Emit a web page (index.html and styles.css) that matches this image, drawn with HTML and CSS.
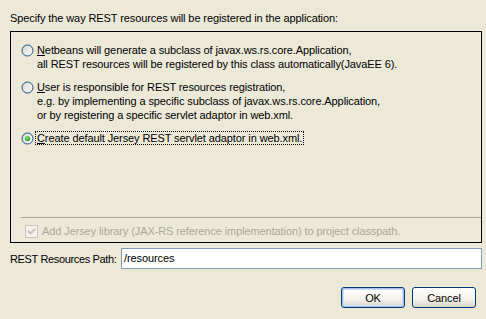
FILE: index.html
```html
<!DOCTYPE html>
<html lang="en">
<head>
  <meta charset="UTF-8">
  <title>REST Resources Configuration</title>
  <link rel="stylesheet" href="styles.css">
</head>
<body>
  <div class="dialog">
    <div class="heading">Specify the way REST resources will be registered in the application:</div>

    <div class="group">
      <div class="options">
        <div class="option">
          <svg class="radio" width="13" height="13" viewBox="0 0 13 13">
            <defs><linearGradient id="rg1" x1="0" y1="0" x2="1" y2="1"><stop offset="0" stop-color="#D6D4CA"/><stop offset="1" stop-color="#FFFFFF"/></linearGradient></defs>
            <circle cx="6.5" cy="6.5" r="5.5" fill="url(#rg1)" stroke="#1C5180"/>
          </svg>
          <div class="option-text"><u>N</u>etbeans will generate a subclass of javax.ws.rs.core.Application,<br>all REST resources will be registered by this class automatically(JavaEE 6).</div>
        </div>

        <div class="option">
          <svg class="radio" width="13" height="13" viewBox="0 0 13 13">
            <defs><linearGradient id="rg2" x1="0" y1="0" x2="1" y2="1"><stop offset="0" stop-color="#D6D4CA"/><stop offset="1" stop-color="#FFFFFF"/></linearGradient></defs>
            <circle cx="6.5" cy="6.5" r="5.5" fill="url(#rg2)" stroke="#1C5180"/>
          </svg>
          <div class="option-text"><u>U</u>ser is responsible for REST resources registration,<br>e.g. by implementing a specific subclass of javax.ws.rs.core.Application,<br>or by registering a specific servlet adaptor in web.xml.</div>
        </div>

        <div class="option">
          <svg class="radio" width="13" height="13" viewBox="0 0 13 13">
            <defs>
              <linearGradient id="rg3" x1="0" y1="0" x2="1" y2="1"><stop offset="0" stop-color="#D6D4CA"/><stop offset="1" stop-color="#FFFFFF"/></linearGradient>
              <radialGradient id="dot" cx="0.4" cy="0.35" r="0.7"><stop offset="0" stop-color="#7BE07B"/><stop offset="1" stop-color="#1E9A1E"/></radialGradient>
            </defs>
            <circle cx="6.5" cy="6.5" r="5.5" fill="url(#rg3)" stroke="#1C5180"/>
            <circle cx="6.5" cy="6.5" r="2.6" fill="url(#dot)"/>
          </svg>
          <div class="option-text"><span class="focused"><u>C</u>reate default Jersey REST servlet adaptor in web.xml.</span></div>
        </div>
      </div>

      <div class="group-footer">
        <div class="separator"></div>
        <div class="check-row">
          <svg class="check" width="13" height="13" viewBox="0 0 13 13">
            <rect x="0.5" y="0.5" width="12" height="12" fill="#F4F3EE" stroke="#C9C7BA"/>
            <polyline points="3,6 5.5,8.5 10,4" fill="none" stroke="#C5C3B5" stroke-width="1.8"/>
          </svg>
          <span class="disabled">Add Jersey library (JAX-RS reference implementation) to project classpath.</span>
        </div>
      </div>
    </div>

    <div class="path-row">
      <label class="path-label">REST Resources Path:</label>
      <div class="path-input">/resources</div>
    </div>

    <div class="buttons">
      <button class="btn btn-default">OK</button>
      <button class="btn">Cancel</button>
    </div>
  </div>
</body>
</html>
```

FILE: styles.css
```css
body {
  margin: 0;
  background-color: #ECE9D8;
  font-family: 'Liberation Sans', Arial, sans-serif;
  font-size: 11px;
  letter-spacing: -0.1px;
  color: #000000;
}

.dialog {
  padding: 12px 4px 0 10px;
  display: flex;
  flex-direction: column;
}

.heading {
  line-height: 13px;
}

.group {
  margin-top: 6px;
  height: 212px;
  box-sizing: border-box;
  border: 1px solid #000000;
  display: flex;
  flex-direction: column;
}

.options {
  padding: 11px 0 0 10px;
  display: flex;
  flex-direction: column;
  gap: 9px;
}

.option {
  display: flex;
  align-items: flex-start;
  gap: 3px;
  line-height: 14px;
}

.radio {
  flex: none;
  margin-top: 1px;
}

.focused {
  outline: 1px dotted #000000;
  outline-offset: 0;
  padding: 0 1px;
  margin-left: -1px;
}

.group-footer {
  margin-top: auto;
  padding-bottom: 4px;
}

.separator {
  margin-left: 10px;
  height: 1px;
  background-color: #ACA899;
}

.check-row {
  display: flex;
  align-items: center;
  gap: 4px;
  padding: 7px 0 0 14px;
  line-height: 13px;
}

.check {
  flex: none;
}

.disabled {
  color: #ACA899;
}

.path-row {
  margin-top: 5px;
  display: flex;
  align-items: center;
}

.path-label {
  width: 111px;
  flex: none;
  white-space: nowrap;
  letter-spacing: -0.35px;
}

.path-input {
  flex: 1;
  height: 21px;
  box-sizing: border-box;
  border: 1px solid #7F9DB9;
  background-color: #FFFFFF;
  padding: 3px 2px;
  line-height: 13px;
}

.buttons {
  margin-top: 18px;
  display: flex;
  justify-content: flex-end;
  gap: 7px;
  padding-right: 6px;
}

.btn {
  width: 64px;
  height: 21px;
  font-family: inherit;
  font-size: 11px;
  letter-spacing: -0.1px;
  color: #000000;
  border: 1px solid #003C74;
  border-radius: 3px;
  background: linear-gradient(#FFFFFF, #F3F2EC 60%, #D9D5C8);
  padding: 0;
}

.btn-default {
  box-shadow: inset 0 0 0 1px #A9C1EC, inset 0 0 0 2px #CEDCF5;
}
```
